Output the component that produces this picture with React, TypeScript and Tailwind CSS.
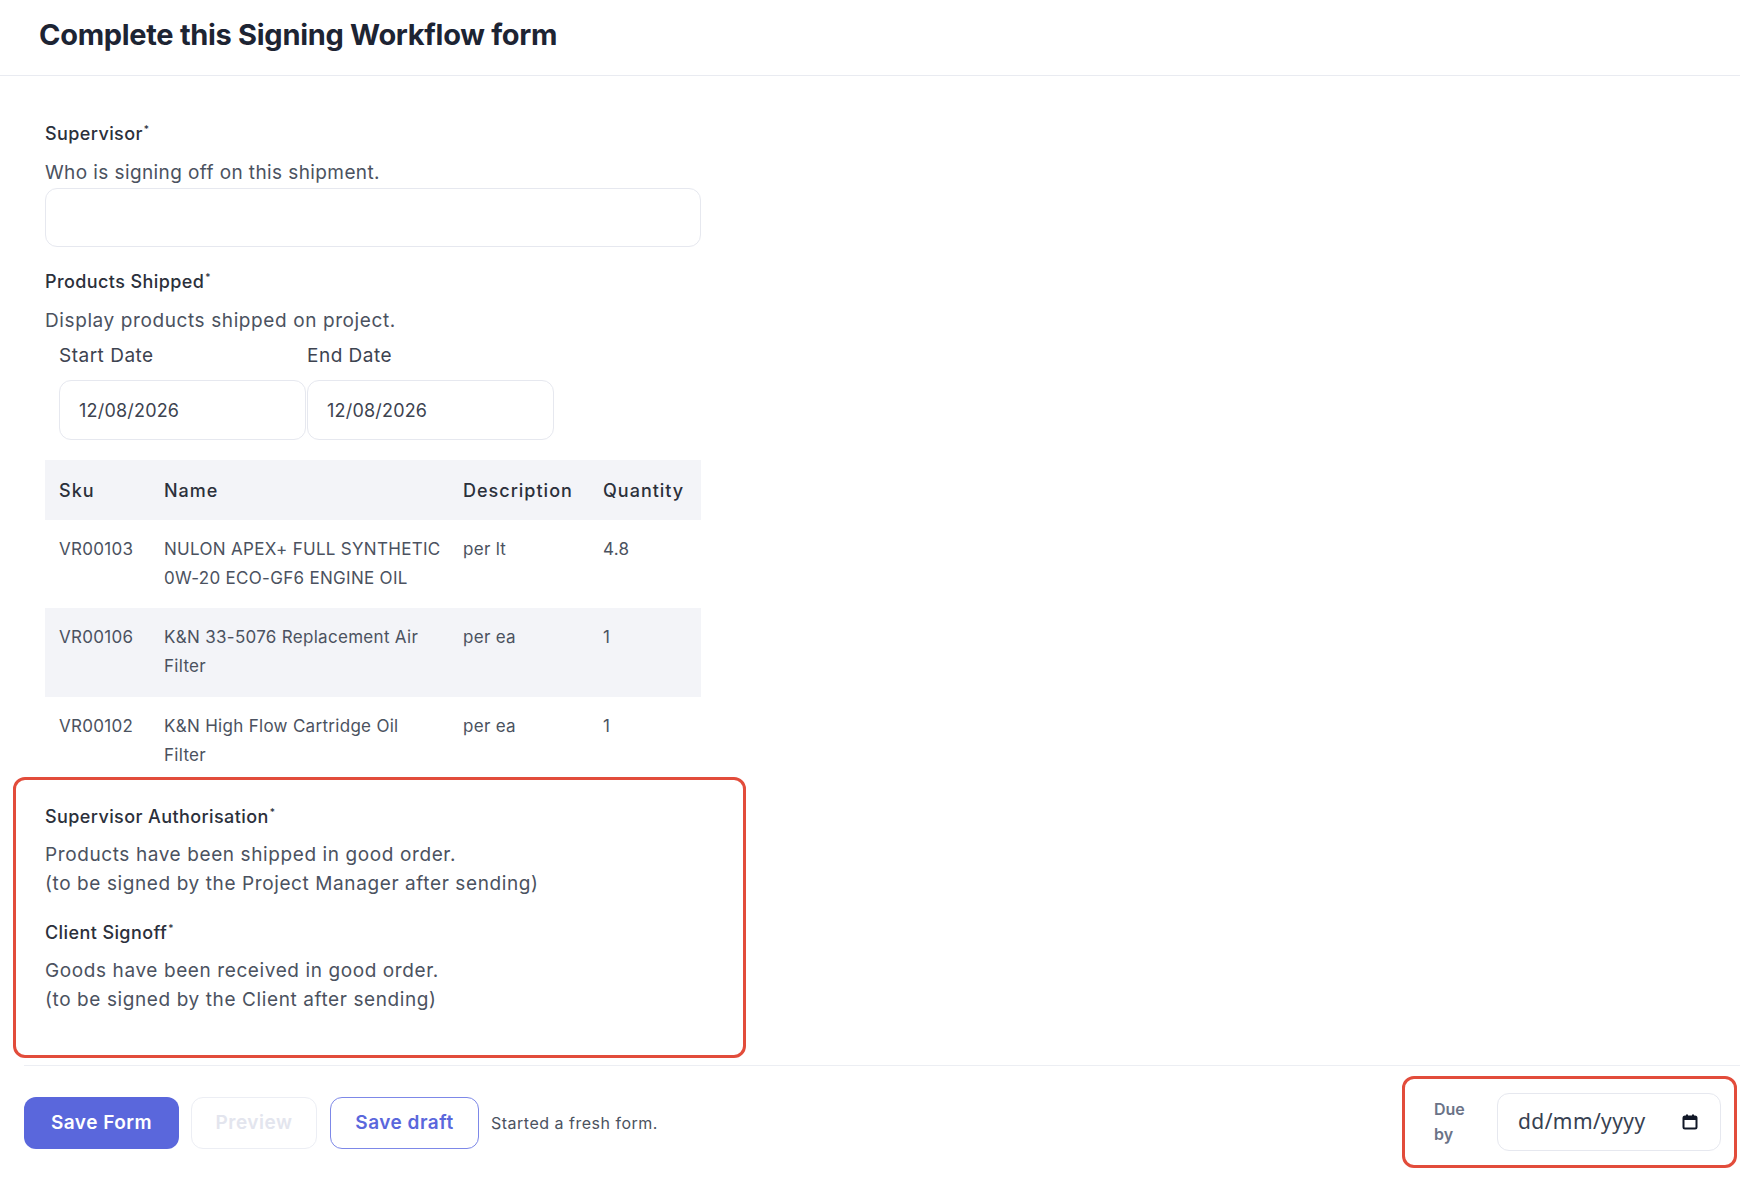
import React from 'react';

interface IProduct {
  sku: string;
  name: string;
  description: string;
  quantity: string;
}

const products: IProduct[] = [
  { sku: 'VR00103', name: 'NULON APEX+ FULL SYNTHETIC 0W-20 ECO-GF6 ENGINE OIL', description: 'per lt', quantity: '4.8' },
  { sku: 'VR00106', name: 'K&N 33-5076 Replacement Air Filter', description: 'per ea', quantity: '1' },
  { sku: 'VR00102', name: 'K&N High Flow Cartridge Oil Filter', description: 'per ea', quantity: '1' },
];

const Label: React.FC<{ children: React.ReactNode }> = ({ children }) => (
  <div className="text-[18px] leading-[29px] font-medium tracking-[0.4px] text-[#2b303b]">
    {children}
    <sup className="text-[10px] ml-[1px] -top-[7px]">*</sup>
  </div>
);

const CalendarIcon = () => (
  <svg width="16" height="16" viewBox="0 0 16 16" fill="none">
    <rect x="1.5" y="2.5" width="13" height="12" rx="1.5" stroke="#111827" strokeWidth="2" />
    <rect x="1.5" y="2.5" width="13" height="3.5" fill="#111827" />
    <rect x="4" y="0.5" width="2" height="3" fill="#111827" />
    <rect x="10" y="0.5" width="2" height="3" fill="#111827" />
  </svg>
);

export default function App() {
  return (
    <div className="w-[1740px] h-[1190px] bg-white font-['Inter',sans-serif] text-[#4b5260] overflow-hidden">
      {/* Page header */}
      <div className="h-[76px] border-b border-[#e9ebf1] pl-[39px] pb-[5px] flex items-center">
        <h1 className="text-[29px] font-bold tracking-[-0.3px] text-[#1d2433]">Complete this Signing Workflow form</h1>
      </div>

      <div className="pl-[13px] pt-[43px]">
        <div className="pl-[32px] w-[688px]">
          {/* Supervisor */}
          <Label>Supervisor</Label>
          <div className="mt-[10px] text-[19px] leading-[29px] tracking-[0.4px]">Who is signing off on this shipment.</div>
          <div className="mt-[1px] h-[59px] w-[656px] rounded-[12px] border border-[#e6e8ef]" />

          {/* Products shipped */}
          <div className="mt-[20px]">
            <Label>Products Shipped</Label>
          </div>
          <div className="mt-[10px] text-[19px] leading-[29px] tracking-[0.6px]">Display products shipped on project.</div>
          <div className="pl-[14px] flex mt-[6px]">
            <div className="w-[248px]">
              <div className="text-[19px] leading-[29px] tracking-[0.5px] text-[#3d4350]">Start Date</div>
              <div className="mt-[10px] h-[60px] w-[247px] rounded-[12px] border border-[#e6e8ef] flex items-center pl-[19px] text-[18px] tracking-[0.2px] text-[#3d4350]">12/08/2026</div>
            </div>
            <div className="w-[248px]">
              <div className="text-[19px] leading-[29px] tracking-[0.5px] text-[#3d4350]">End Date</div>
              <div className="mt-[10px] h-[60px] w-[247px] rounded-[12px] border border-[#e6e8ef] flex items-center pl-[19px] text-[18px] tracking-[0.2px] text-[#3d4350]">12/08/2026</div>
            </div>
          </div>

          {/* Products table */}
          <div className="mt-[20px] w-[656px] text-[17px] leading-[29px] tracking-[0.3px]">
            <div className="grid grid-cols-[105px_299px_140px_112px] h-[60px] items-center bg-[#f3f4f8] text-[18px] font-medium tracking-[1px] text-[#2b303b]">
              <div className="pl-[14px]">Sku</div>
              <div className="pl-[14px]">Name</div>
              <div className="pl-[14px]">Description</div>
              <div className="pl-[14px]">Quantity</div>
            </div>
            {products.map((p, idx) => (
              <div
                key={p.sku}
                className={`grid grid-cols-[105px_299px_140px_112px] pt-[15px] ${idx === 1 ? 'bg-[#f3f4f8] pb-[16px]' : idx === 2 ? 'pb-[7px]' : 'pb-[15px]'}`}
              >
                <div className="pl-[14px]">{p.sku}</div>
                <div className="pl-[14px] pr-[4px]">{p.name}</div>
                <div className="pl-[14px]">{p.description}</div>
                <div className="pl-[14px]">{p.quantity}</div>
              </div>
            ))}
          </div>
        </div>

        {/* Signature section */}
        <div className="w-[733px] h-[281px] rounded-[12px] border-[3px] border-[#e24c3b] pl-[29px] pt-[22px]">
          <Label>Supervisor Authorisation</Label>
          <div className="mt-[9px] text-[19px] leading-[29px] tracking-[0.6px]">
            <div>Products have been shipped in good order.</div>
            <div>(to be signed by the Project Manager after sending)</div>
          </div>
          <div className="mt-[20px]">
            <Label>Client Signoff</Label>
          </div>
          <div className="mt-[9px] text-[19px] leading-[29px] tracking-[0.6px]">
            <div>Goods have been received in good order.</div>
            <div>(to be signed by the Client after sending)</div>
          </div>
        </div>
      </div>

      {/* Footer actions */}
      <div className="mt-[7px] ml-[24px] border-t border-[#eceef3] flex items-start justify-between">
        <div className="flex items-center mt-[31px]">
          <button className="w-[155px] h-[52px] rounded-[12px] bg-[#5a67dc] text-white text-[19px] font-semibold tracking-[0.5px]">Save Form</button>
          <button className="ml-[12px] w-[126px] h-[52px] rounded-[12px] border border-[#eceef4] text-[#e3e5ee] text-[19px] font-semibold tracking-[0.5px]">Preview</button>
          <button className="ml-[13px] w-[149px] h-[52px] rounded-[12px] border-[1.5px] border-[#7d88e8] text-[#5a67dc] text-[19px] font-semibold tracking-[0.5px]">Save draft</button>
          <span className="ml-[12px] text-[16px] tracking-[0.5px] text-[#4b5260]">Started a fresh form.</span>
        </div>

        <div className="mt-[10px] mr-[3px] w-[335px] h-[92px] rounded-[12px] border-[3px] border-[#e24c3b] flex items-center">
          <div className="ml-[29px] w-[50px] text-[16px] leading-[25px] font-semibold text-[#6b7387]">
            Due
            <br />
            by
          </div>
          <div className="ml-[13px] w-[224px] h-[58px] rounded-[12px] border border-[#e6e8ef] flex items-center justify-between pl-[20px] pr-[22px]">
            <span className="font-['Noto_Sans',sans-serif] text-[21px] tracking-[0.4px] text-[#374151]">dd/mm/yyyy</span>
            <CalendarIcon />
          </div>
        </div>
      </div>
    </div>
  );
}
